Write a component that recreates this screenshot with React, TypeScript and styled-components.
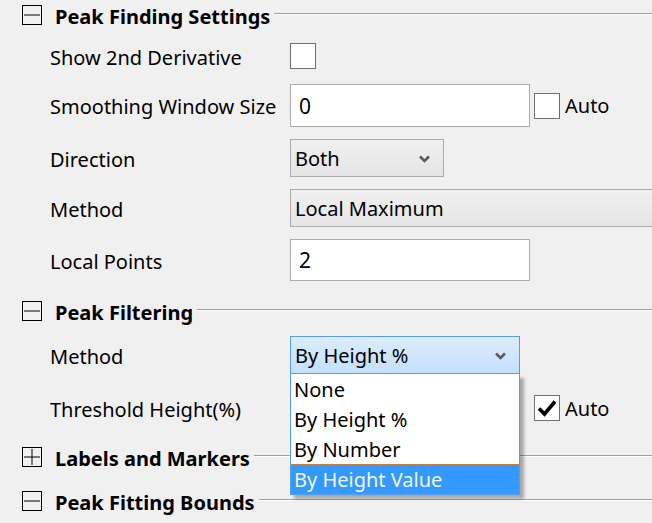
import React from "react";
import styled, { createGlobalStyle } from "styled-components";

const GlobalStyle = createGlobalStyle`
  html, body {
    margin: 0;
    padding: 0;
    background: #f0f0f0;
  }
  body {
    font-family: "Noto Sans", "Open Sans", sans-serif;
    color: #000;
    overflow: hidden;
  }
`;

const Page = styled.div`
  width: 652px;
  height: 523px;
  overflow: hidden;
  display: flex;
  flex-direction: column;
`;

const Section = styled.section<{ $open: boolean }>`
  display: flex;
  flex-direction: column;
  padding-bottom: ${(p) => (p.$open ? "0" : "14px")};
`;

const Header = styled.div`
  height: 30px;
  display: flex;
  align-items: center;
  padding-left: 22px;
`;

const ToggleBox = styled.span`
  width: 20px;
  height: 20px;
  box-sizing: border-box;
  border: 1px solid #000;
  flex: none;
  svg {
    display: block;
  }
`;

const Title = styled.span`
  font-weight: 700;
  font-size: 20px;
  margin-left: 13px;
  padding-top: 3px;
  white-space: nowrap;
  line-height: 1;
`;

const Rule = styled.span`
  flex: 1;
  height: 0;
  border-top: 1px solid #a0a0a0;
  border-bottom: 1px solid #ffffff;
  margin-left: 4px;
  margin-top: -2px;
`;

const Body = styled.div<{ $top: number; $bottom: number }>`
  display: flex;
  flex-direction: column;
  gap: 12px;
  padding: ${(p) => `${p.$top}px 0 ${p.$bottom}px 50px`};
`;

const Row = styled.div<{ $h?: number }>`
  display: grid;
  grid-template-columns: 240px auto;
  align-items: center;
  min-height: ${(p) => (p.$h ? `${p.$h}px` : "0")};
`;

const Label = styled.span`
  font-size: 20px;
  white-space: nowrap;
  padding-top: 2px;
`;

const Controls = styled.div`
  display: flex;
  align-items: center;
  gap: 4px;
`;

const TextInput = styled.div<{ $w: number; $h: number }>`
  width: ${(p) => p.$w}px;
  height: ${(p) => p.$h}px;
  box-sizing: border-box;
  background: #fff;
  border: 1px solid #acacac;
  display: flex;
  align-items: center;
  padding-left: 8px;
  font-size: 21px;
`;

const Spacer = styled.span<{ $w: number }>`
  width: ${(p) => p.$w}px;
  flex: none;
`;

const Check = styled.span`
  width: 26px;
  height: 26px;
  box-sizing: border-box;
  border: 1px solid #707070;
  background: #fff;
  display: inline-flex;
  align-items: center;
  justify-content: center;
  flex: none;
`;

const CheckText = styled.span`
  font-size: 20px;
  margin-left: 1px;
`;

const SelectWrap = styled.div`
  position: relative;
`;

const Select = styled.div<{ $w: number; $active?: boolean }>`
  width: ${(p) => p.$w}px;
  height: 38px;
  box-sizing: border-box;
  border: 1px solid ${(p) => (p.$active ? "#569de5" : "#acacac")};
  background: ${(p) =>
    p.$active
      ? "linear-gradient(#dcecfc, #c4e0fc)"
      : "linear-gradient(#f0f0f0, #e5e5e5)"};
  display: flex;
  align-items: center;
  justify-content: space-between;
  padding: 1px 13px 0 4px;
  font-size: 20px;
  white-space: nowrap;
  svg {
    flex: none;
  }
`;

const DropList = styled.ul`
  position: absolute;
  left: 0;
  top: 100%;
  width: 230px;
  margin: 0;
  padding: 0;
  list-style: none;
  box-sizing: border-box;
  background: #fff;
  border: 1px solid #569de5;
  border-top: none;
  box-shadow: 4px 4px 3px rgba(0, 0, 0, 0.3);
  z-index: 5;
`;

const DropItem = styled.li<{ $selected?: boolean }>`
  height: 30px;
  box-sizing: border-box;
  padding: 1px 0 0 2px;
  display: flex;
  align-items: center;
  font-size: 20px;
  background: ${(p) => (p.$selected ? "#3399ff" : "transparent")};
  color: ${(p) => (p.$selected ? "#f4f4f4" : "#000")};
  border: 1px dotted ${(p) => (p.$selected ? "#d0833a" : "transparent")};
`;

const Chevron = () => (
  <svg width="11" height="8" viewBox="0 0 11 8">
    <path d="M1 1.5 L5.5 6 L10 1.5" fill="none" stroke="#5a5a5a" strokeWidth="2.6" />
  </svg>
);

const Tick = () => (
  <svg width="20" height="18" viewBox="0 0 20 18">
    <path d="M2 9.5 L7.5 15 L18 2.5" fill="none" stroke="#000" strokeWidth="3.6" />
  </svg>
);

const Toggle = ({ open }: { open: boolean }) => (
  <ToggleBox>
    <svg width="18" height="18" viewBox="0 0 18 18">
      <line x1="1" y1="9" x2="17" y2="9" stroke="#000" strokeWidth="1" />
      {!open && <line x1="9" y1="1" x2="9" y2="17" stroke="#000" strokeWidth="1" />}
    </svg>
  </ToggleBox>
);

const SectionHeader = ({ title, open }: { title: string; open: boolean }) => (
  <Header>
    <Toggle open={open} />
    <Title>{title}</Title>
    <Rule />
  </Header>
);

const filterOptions = ["None", "By Height %", "By Number", "By Height Value"];

export default function App() {
  return (
    <Page>
      <GlobalStyle />
      <Section $open>
        <SectionHeader title="Peak Finding Settings" open />
        <Body $top={10} $bottom={15}>
          <Row $h={32}>
            <Label>Show 2nd Derivative</Label>
            <Controls>
              <Check />
            </Controls>
          </Row>
          <Row>
            <Label>Smoothing Window Size</Label>
            <Controls>
              <TextInput $w={240} $h={43}>0</TextInput>
              <Check />
              <CheckText>Auto</CheckText>
            </Controls>
          </Row>
          <Row>
            <Label>Direction</Label>
            <Controls>
              <Select $w={154}>
                Both
                <Chevron />
              </Select>
            </Controls>
          </Row>
          <Row>
            <Label>Method</Label>
            <Controls>
              <Select $w={400}>Local Maximum</Select>
            </Controls>
          </Row>
          <Row>
            <Label>Local Points</Label>
            <Controls>
              <TextInput $w={240} $h={42}>2</TextInput>
            </Controls>
          </Row>
        </Body>
      </Section>
      <Section $open>
        <SectionHeader title="Peak Filtering" open />
        <Body $top={10} $bottom={12}>
          <Row>
            <Label>Method</Label>
            <Controls>
              <SelectWrap>
                <Select $w={230} $active>
                  By Height %
                  <Chevron />
                </Select>
                <DropList>
                  {filterOptions.map((o, i) => (
                    <DropItem key={o} $selected={i === filterOptions.length - 1}>
                      {o}
                    </DropItem>
                  ))}
                </DropList>
              </SelectWrap>
            </Controls>
          </Row>
          <Row $h={44}>
            <Label>Threshold Height(%)</Label>
            <Controls>
              <Spacer $w={240} />
              <Check>
                <Tick />
              </Check>
              <CheckText>Auto</CheckText>
            </Controls>
          </Row>
        </Body>
      </Section>
      <Section $open={false}>
        <SectionHeader title="Labels and Markers" open={false} />
      </Section>
      <Section $open>
        <SectionHeader title="Peak Fitting Bounds" open />
      </Section>
    </Page>
  );
}
